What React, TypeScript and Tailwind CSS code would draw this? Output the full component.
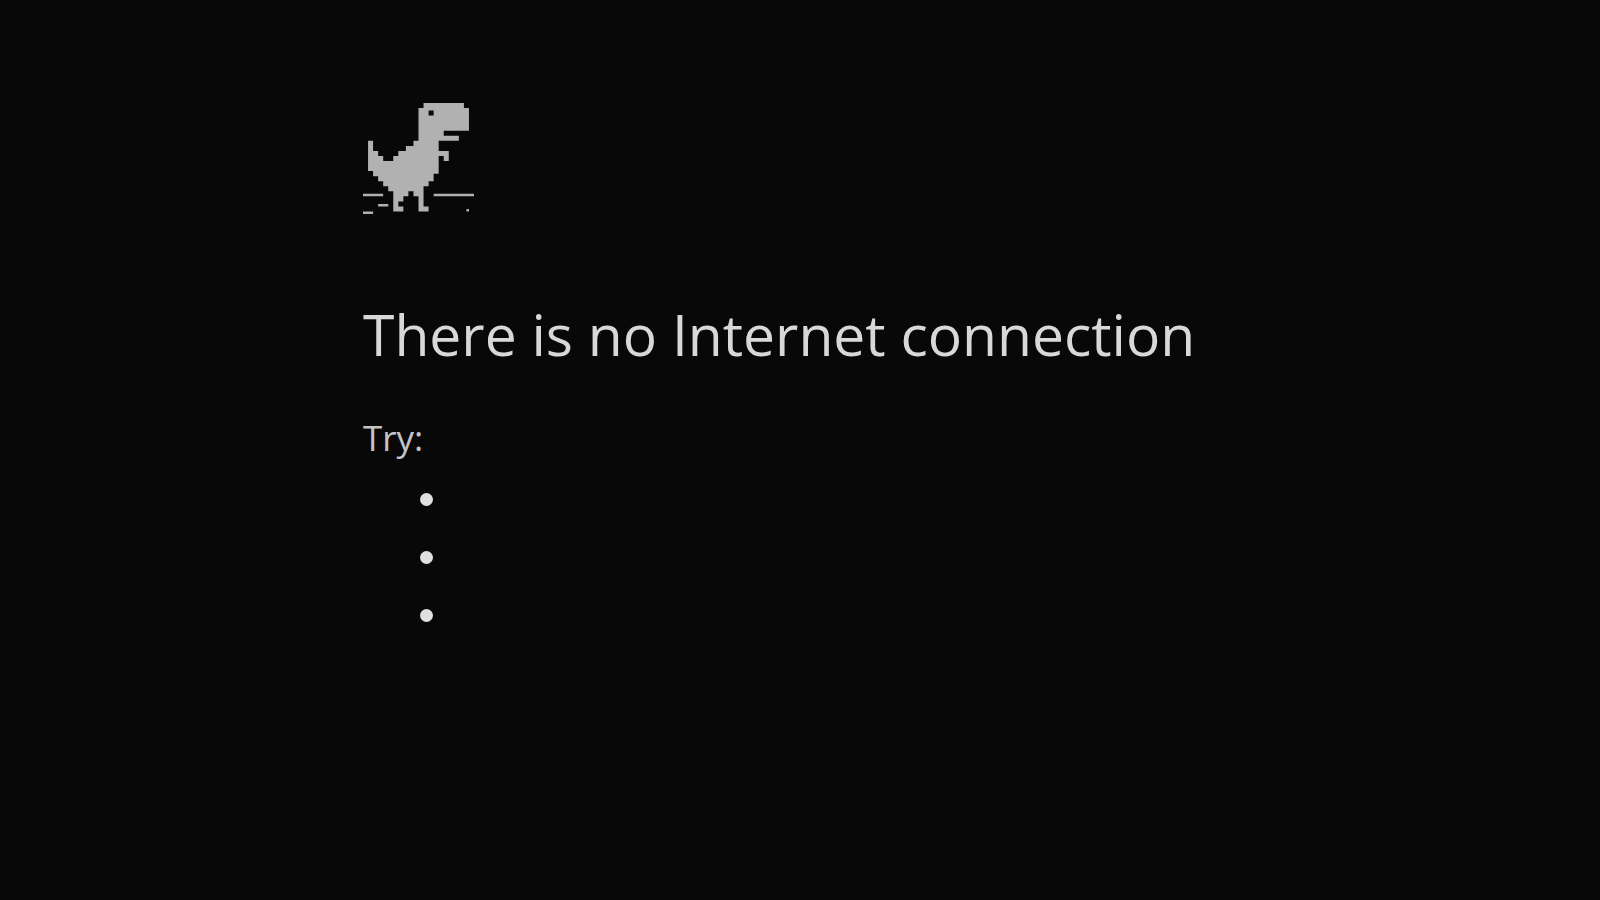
const suggestions = ['cables', 'router', 'diagnostics']

function Dino() {
  return (
    <svg className="w-[111px] h-[111px] fill-[#b1b1b1]" viewBox="0 0 44 44" aria-hidden="true">
      {/* Body, with the eye cut out */}
      <path
        fillRule="evenodd"
        d="M24 0H40V2H42V11H32V13H38V15H30V19H34V23H32V21H30V28H28V31H26V33H24V41H26V43H22V37H20V35H18V37H16V39H14V41H16V43H12V35H10V33H8V31H6V29H4V27H2V15H4V19H6V21H8V23H12V21H14V19H17V17H20V15H22V2H24ZM26 3V5H28V3Z"
      />
      {/* Ground */}
      <path d="M0 36H8V37H0ZM28 36H44V37H28ZM6 40H10V41H6ZM0 43H4V44H0ZM41 42H42V43H41Z" />
    </svg>
  )
}

export default function App() {
  return (
    <div className="min-h-screen bg-[#080808] px-6 pt-[103px] pb-16 font-['Open_Sans','Noto_Sans',sans-serif] text-[#d8d8d8]">
      <main className="mx-auto w-full max-w-[874px]">
        <Dino />
        <h1 className="mt-20 text-[57px] leading-[80px]">There is no Internet connection</h1>
        <p className="mt-10 text-[35px] leading-[48px] text-[#c4c4c4]">Try:</p>
        <ul className="mt-2 pl-[57px]">
          {suggestions.map((item) => (
            <li key={item} className="flex h-[58px] items-center">
              <span className="size-[13px] rounded-full bg-[#e0e0e0]" />
            </li>
          ))}
        </ul>
      </main>
    </div>
  )
}
